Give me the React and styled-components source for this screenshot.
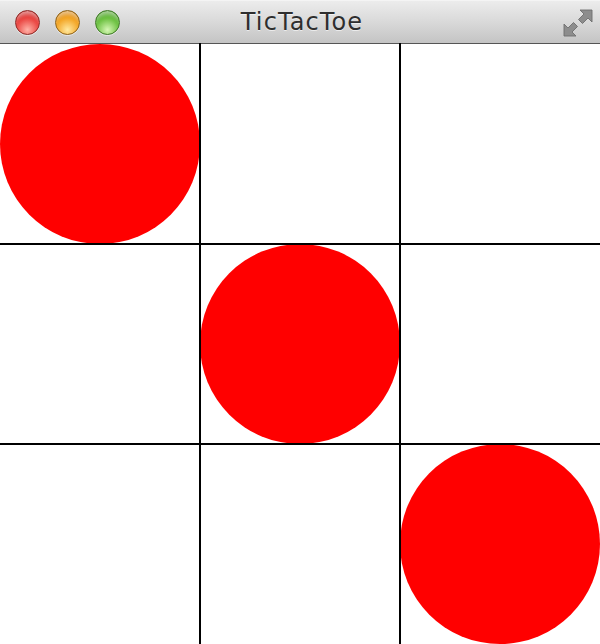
import React from "react";
import styled, { createGlobalStyle } from "styled-components";

const Global = createGlobalStyle`
  html, body { margin: 0; padding: 0; background: #fff; }
  body { font-family: "DejaVu Sans", "Liberation Sans", sans-serif; }
`;

const Window = styled.div`
  width: 600px;
  height: 644px;
  display: flex;
  flex-direction: column;
  overflow: hidden;
`;

const TitleBar = styled.div`
  flex: none;
  display: flex;
  align-items: center;
  padding: 0 6px 0 15px;
  background: linear-gradient(#ececec, #d9d9d9 50%, #c4c4c4);
  border-top: 1px solid #f4f4f4;
  border-bottom: 1px solid #555;
  box-sizing: border-box;
  height: 44px;
`;

const Lights = styled.div`
  display: flex;
  gap: 15px;
  padding-top: 1px;
`;

const Light = styled.div`
  width: 25px;
  height: 25px;
  border-radius: 50%;
  box-sizing: border-box;
  border: 1px solid ${(p) => p.$edge};
  background: radial-gradient(circle at 50% 82%, ${(p) => p.$glow} 0%, ${(p) => p.$base} 55%, ${(p) => p.$dark} 100%);
  box-shadow: inset 0 6px 4px -3px rgba(255,255,255,0.55), 0 1px 0 rgba(255,255,255,0.5);
`;

const Title = styled.div`
  flex: 1;
  text-align: center;
  font-family: "DejaVu Sans", "Liberation Sans", sans-serif;
  font-size: 24px;
  letter-spacing: 1.1px;
  color: #2e2e2e;
  text-shadow: 0 1px 0 rgba(255,255,255,0.6);
  margin-left: -78px;
`;

const FullScreen = styled.svg`
  width: 32px;
  height: 30px;
  flex: none;
  margin-top: 2px;
`;

const Board = styled.div`
  display: grid;
  grid-template-columns: repeat(3, 200px);
  grid-template-rows: repeat(3, 200px);
`;

const Cell = styled.div`
  position: relative;
  width: 200px;
  height: 200px;
  &::after {
    content: "";
    display: ${(p) => (p.$right ? "block" : "none")};
    position: absolute;
    top: -1px;
    bottom: -1px;
    right: -1px;
    width: 2px;
    background: #000;
    z-index: 2;
  }
  &::before {
    content: "";
    display: ${(p) => (p.$bottom ? "block" : "none")};
    position: absolute;
    left: -1px;
    right: -1px;
    bottom: -1px;
    height: 2px;
    background: #000;
    z-index: 2;
  }
`;

const Mark = styled.div`
  width: 200px;
  height: 200px;
  border-radius: 50%;
  background: #ff0000;
`;

const marks = [true, false, false, false, true, false, false, false, true];

export default function App() {
  return (
    <>
      <Global />
      <Window>
        <TitleBar>
          <Lights>
            <Light $base="#e9403c" $glow="#ffb3a8" $dark="#b81d1c" $edge="#8e2a26" />
            <Light $base="#f2a21f" $glow="#ffe9a0" $dark="#c27311" $edge="#8f6318" />
            <Light $base="#67be3b" $glow="#d6f7b5" $dark="#3c8a22" $edge="#3f7a26" />
          </Lights>
          <Title>TicTacToe</Title>
          <FullScreen viewBox="0 0 32 30">
            <path
              d="M18 2 L30 2 L30 14 L26 10 L20.5 15.5 L16.5 11.5 L22 6 Z"
              fill="#8d8d8d"
              stroke="#6e6e6e"
              strokeWidth="0.9"
              strokeLinejoin="round"
            />
            <path
              d="M14 28 L2 28 L2 16 L6 20 L11.5 14.5 L15.5 18.5 L10 24 Z"
              fill="#8d8d8d"
              stroke="#6e6e6e"
              strokeWidth="0.9"
              strokeLinejoin="round"
            />
          </FullScreen>
        </TitleBar>
        <Board>
          {marks.map((m, i) => (
            <Cell key={i} $right={i % 3 < 2} $bottom={i < 6}>
              {m && <Mark />}
            </Cell>
          ))}
        </Board>
      </Window>
    </>
  );
}
